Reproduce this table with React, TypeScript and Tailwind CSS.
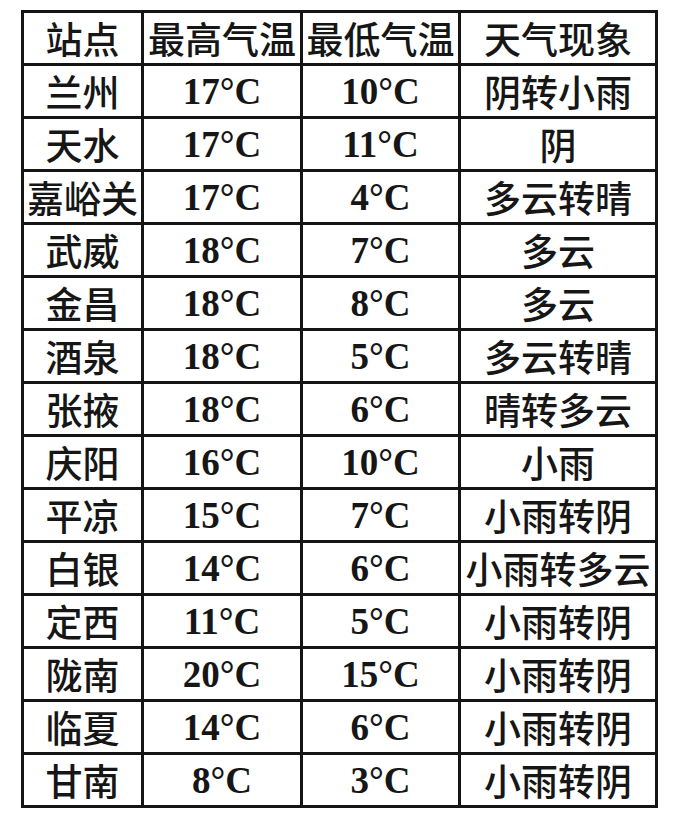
import React from "react";

const rows: [string, string, string, string][] = [
  ["兰州", "17°C", "10°C", "阴转小雨"],
  ["天水", "17°C", "11°C", "阴"],
  ["嘉峪关", "17°C", "4°C", "多云转晴"],
  ["武威", "18°C", "7°C", "多云"],
  ["金昌", "18°C", "8°C", "多云"],
  ["酒泉", "18°C", "5°C", "多云转晴"],
  ["张掖", "18°C", "6°C", "晴转多云"],
  ["庆阳", "16°C", "10°C", "小雨"],
  ["平凉", "15°C", "7°C", "小雨转阴"],
  ["白银", "14°C", "6°C", "小雨转多云"],
  ["定西", "11°C", "5°C", "小雨转阴"],
  ["陇南", "20°C", "15°C", "小雨转阴"],
  ["临夏", "14°C", "6°C", "小雨转阴"],
  ["甘南", "8°C", "3°C", "小雨转阴"],
];

const cjk =
  "bg-white flex items-center justify-center whitespace-nowrap text-[37px] leading-none font-medium font-['Noto_Sans_CJK_SC','Noto_Sans',sans-serif]";
const serif =
  "bg-white flex items-center justify-center whitespace-nowrap text-[37px] font-bold leading-none font-['Liberation_Serif',serif]";

export default function App() {
  return (
    <div className="w-[677px] h-[818px] bg-white pt-[10px] pl-[21px]">
      <div className="inline-grid grid-cols-[117px_156px_155px_194px] auto-rows-[50px] gap-[3px] p-[3px] bg-[#151515] text-[#161616]">
        {["站点", "最高气温", "最低气温", "天气现象"].map((h) => (
          <div key={h} className={cjk}>
            {h}
          </div>
        ))}
        {rows.map((r) => (
          <React.Fragment key={r[0]}>
            <div className={cjk}>{r[0]}</div>
            <div className={serif}>{r[1]}</div>
            <div className={serif}>{r[2]}</div>
            <div className={cjk}>{r[3]}</div>
          </React.Fragment>
        ))}
      </div>
    </div>
  );
}
